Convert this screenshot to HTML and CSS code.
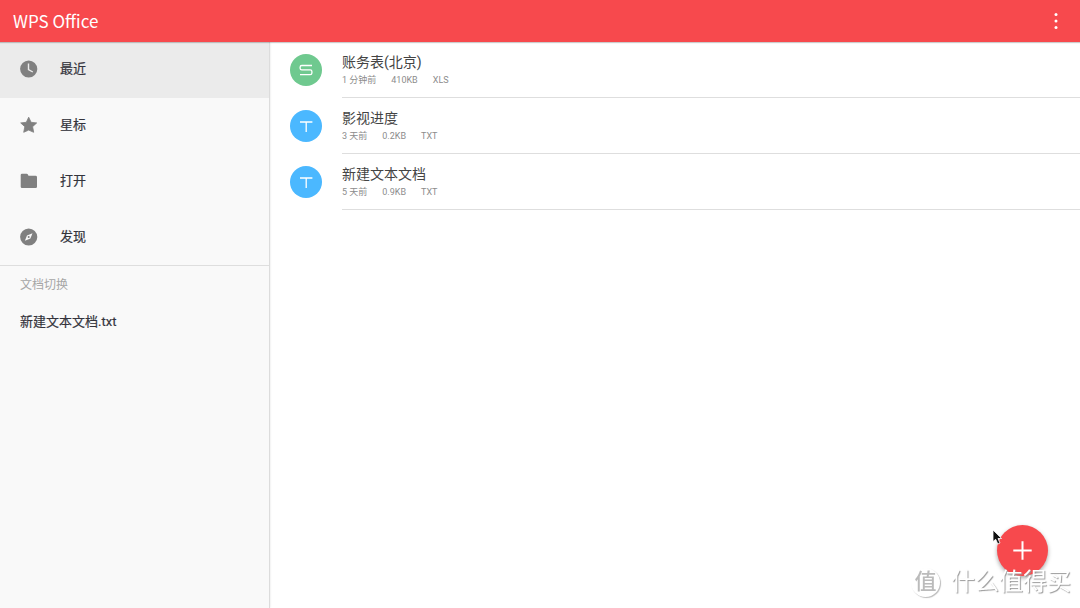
FILE: index.html
```html
<!DOCTYPE html>
<html lang="zh-CN">
<head>
<meta charset="utf-8">
<meta name="viewport" content="width=device-width, initial-scale=1">
<title>WPS Office</title>
<link rel="stylesheet" href="styles.css">
</head>
<body>
<header class="topbar">
  <h1 class="brand">WPS Office</h1>
  <button class="more" type="button" aria-label="更多">
    <svg width="6" height="18" viewBox="0 0 6 18" fill="#fff"><circle cx="3" cy="2.4" r="1.5"/><circle cx="3" cy="9" r="1.5"/><circle cx="3" cy="15.6" r="1.5"/></svg>
  </button>
</header>
<div class="layout">
  <aside class="sidebar">
    <nav class="nav">
      <a class="nav-item active" href="#recent">
        <svg class="nav-icon" viewBox="0 0 18 18"><circle cx="8.7" cy="9" r="8.6" fill="#808080"/><path d="M8.5 3.6V9.6L12.8 12" fill="none" stroke="#ebebeb" stroke-width="1.4"/></svg>
        <span class="nav-label">最近</span></a>
      <a class="nav-item" href="#starred">
        <svg class="nav-icon" viewBox="0 0 18 18"><path d="M8.7 1.2L11.1 6.3L16.7 6.9L12.6 10.7L13.7 16.3L8.7 14.1L3.7 16.3L4.8 10.7L.7 6.9L6.3 6.3Z" fill="#808080" stroke="#808080" stroke-width=".8" stroke-linejoin="round"/></svg>
        <span class="nav-label">星标</span></a>
      <a class="nav-item" href="#open">
        <svg class="nav-icon" viewBox="0 0 18 18"><path d="M2 1.8H6.7Q7.5 1.8 7.9 2.6L8.5 3.8H15.6Q17 3.8 17 5.2V14.7Q17 16 15.7 16H2Q.7 16 .7 14.7V3.1Q.7 1.8 2 1.8Z" fill="#808080"/></svg>
        <span class="nav-label">打开</span></a>
      <a class="nav-item" href="#discover">
        <svg class="nav-icon" viewBox="0 0 18 18"><circle cx="8.7" cy="9" r="8.6" fill="#808080"/><path d="M12.5 5.2L10.4 10.4L4.9 12.8L7 7.6Z" fill="#f9f9f9"/><circle cx="8.7" cy="9" r="1" fill="#808080"/></svg>
        <span class="nav-label">发现</span></a>
    </nav>
    <h2 class="section-title">文档切换</h2>
    <a class="open-doc" href="#doc">新建文本文档.txt</a>
  </aside>
  <main class="files">
    <a class="file" href="#file-1">
      <svg class="file-icon" viewBox="0 0 32 32"><circle cx="16" cy="16" r="16" fill="#6fc98f"/><path d="M22 11.5H11.8Q10.1 11.5 10.1 13.2V14.2Q10.1 15.9 11.8 15.9H20.2Q21.9 15.9 21.9 17.6V18.9Q21.9 20.6 20.2 20.6H10" fill="none" stroke="#fff" stroke-width="1.3"/></svg>
      <span class="file-body">
        <span class="file-name">账务表(北京)</span>
        <span class="meta"><span>1 分钟前</span><span>410KB</span><span>XLS</span></span>
      </span>
    </a>
    <a class="file" href="#file-2">
      <svg class="file-icon" viewBox="0 0 32 32"><circle cx="16" cy="16" r="16" fill="#4bb8ff"/><path d="M10 12H22.4M16.2 12V22" fill="none" stroke="#fff" stroke-width="1.3"/></svg>
      <span class="file-body">
        <span class="file-name">影视进度</span>
        <span class="meta"><span>3 天前</span><span>0.2KB</span><span>TXT</span></span>
      </span>
    </a>
    <a class="file" href="#file-3">
      <svg class="file-icon" viewBox="0 0 32 32"><circle cx="16" cy="16" r="16" fill="#4bb8ff"/><path d="M10 12H22.4M16.2 12V22" fill="none" stroke="#fff" stroke-width="1.3"/></svg>
      <span class="file-body">
        <span class="file-name">新建文本文档</span>
        <span class="meta"><span>5 天前</span><span>0.9KB</span><span>TXT</span></span>
      </span>
    </a>
  </main>
</div>
<button class="fab" type="button" aria-label="新建">
  <svg width="19" height="19" viewBox="0 0 19 19"><path d="M9.5 .3V18.7M.3 9.5H18.7" stroke="#fff" stroke-width="2"/></svg>
</button>
<div class="watermark"><span class="watermark-seal">值</span><span class="watermark-text">什么值得买</span></div>
<svg class="cursor" width="12" height="17" viewBox="0 0 12 17"><path d="M1 1V12.6L3.7 10.3L5.8 15L8 14L6 9.5H9.6Z" fill="#111" stroke="#fff" stroke-width=".8"/></svg>
</body>
</html>
```

FILE: styles.css
```css
* { box-sizing: border-box; }

body {
  margin: 0;
  min-height: 100vh;
  display: flex;
  flex-direction: column;
  background: #fff;
  color: #34343c;
  font-family: Roboto, "Noto Sans CJK SC", sans-serif;
  font-size: 13px;
}

a { color: inherit; text-decoration: none; }
button { border: 0; padding: 0; cursor: pointer; }
svg { display: block; flex: none; }

.topbar {
  z-index: 1;
  display: flex;
  align-items: center;
  justify-content: space-between;
  height: 42px;
  padding: 0 21px 0 13px;
  background: #f7494d;
  box-shadow: 0 1px 1px rgba(0, 0, 0, .2);
}

.brand {
  margin: 0;
  color: #fff;
  font: 400 17px/24px "Noto Sans CJK SC", sans-serif;
}

.more { background: none; }

.layout { flex: 1; display: flex; }

.sidebar {
  flex: 0 0 25%;
  background: #f9f9f9;
  border-right: 1px solid #dcdcdc;
  box-shadow: 0 0 2px rgba(0, 0, 0, .12);
}

.nav { border-bottom: 1px solid #dedede; }

.nav-item {
  display: flex;
  align-items: center;
  gap: 22px;
  height: 56px;
  padding: 0 20px 2px;
}

.nav-item:last-child { height: 55px; }
.nav-item.active { background: #ebebeb; }
.nav-icon { width: 18px; height: 18px; }
.nav-label { line-height: 20px; }

.nav-label,
.open-doc {
  font-family: Roboto, "Noto Sans CJK SC", sans-serif;
  -webkit-text-stroke: .2px currentColor;
}

.section-title {
  margin: 0;
  padding: 9px 20px 7px;
  color: #a6a6a6;
  font-size: 12px;
  line-height: 20px;
  font-weight: 400;
}

.open-doc {
  display: block;
  padding: 8px 20px;
  line-height: 24px;
}

.files { flex: 1; min-width: 0; padding-left: 20px; }

.file {
  display: flex;
  align-items: center;
  gap: 20px;
}

.file-icon { width: 32px; height: 32px; }

.file-body {
  flex: 1;
  display: flex;
  flex-direction: column;
  height: 56px;
  padding-top: 10px;
  border-bottom: 1px solid #dedede;
}

.file-name {
  color: #444;
  font-size: 14px;
  line-height: 20px;
}

.meta {
  display: flex;
  gap: 15px;
  color: #8c8c8c;
  font-size: 9px;
  line-height: 17px;
}

.fab {
  position: fixed;
  right: 32px;
  bottom: 32px;
  display: grid;
  place-items: center;
  width: 51px;
  height: 51px;
  border-radius: 50%;
  background: #f7494d;
  box-shadow: 0 2px 4px rgba(0, 0, 0, .35);
}

.watermark {
  position: fixed;
  right: 9px;
  bottom: 10px;
  display: flex;
  align-items: center;
  gap: 11px;
  color: #fff;
  font-size: 24px;
  line-height: 32px;
  text-shadow: 1px 1px 1px #999;
  pointer-events: none;
}

.watermark-seal {
  width: 29px;
  height: 29px;
  border-radius: 50%;
  box-shadow: 1px 1px 1px #bbb;
  color: #bbb;
  font-size: 22px;
  font-weight: 500;
  line-height: 28px;
  text-align: center;
  text-shadow: none;
}

.cursor {
  position: fixed;
  right: 76px;
  bottom: 62px;
  pointer-events: none;
}
```
